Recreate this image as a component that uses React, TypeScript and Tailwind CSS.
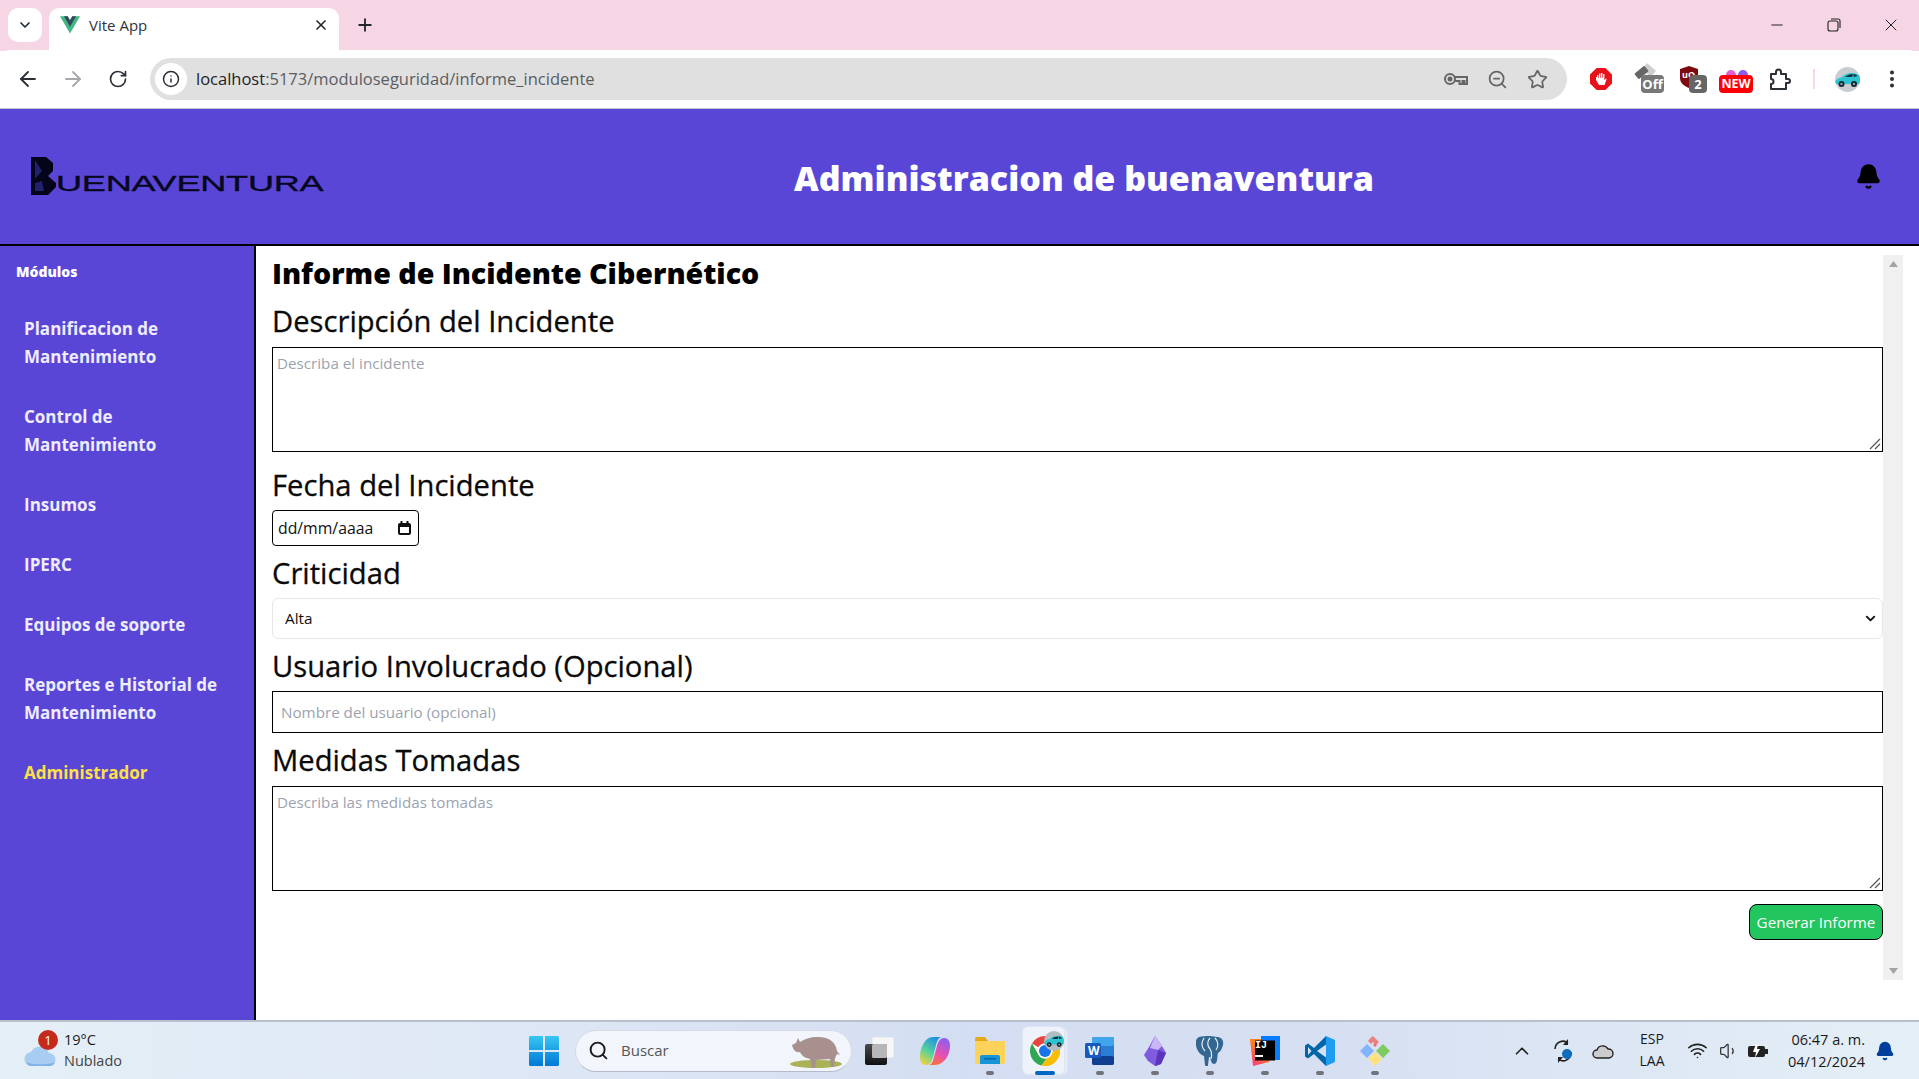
import React from "react";
import { ArrowLeft, ArrowRight, RotateCw, Info, ZoomOut, Star, EllipsisVertical, Plus, X, ChevronDown, ChevronUp, Minus, Bell, Search, Wifi, Volume1 } from "lucide-react";

const sans = "font-['Open_Sans','Noto_Sans',sans-serif]";

function Car({ size }: { size: number }) {
  return (
    <svg width={size} height={size} viewBox="0 0 25 25">
      <path fill="#2bc4d0" d="M0 15c1-3 4-4 7-5 3-3 6-4 10-4 3 0 6 1 8 3v8H1z" />
      <path fill="#14303c" d="M10 10c2-2 5-3 8-3l-1 3zM18.500 7c2 0 3 1 4 2l-4 1z" />
      <circle cx="6.500" cy="17" r="3" fill="#12222a" />
      <circle cx="19" cy="17" r="3" fill="#12222a" />
      <circle cx="6.500" cy="17" r="1.200" fill="#8aa" />
      <circle cx="19" cy="17" r="1.200" fill="#8aa" />
    </svg>
  );
}

function Tabstrip() {
  return (
    <div className="h-[51px] bg-[#f6d5e4] flex items-start pl-[8px] shrink-0">
      <div className="mt-[8px] w-[34px] h-[34px] bg-white rounded-[10px] flex items-center justify-center">
        <ChevronDown size={16} strokeWidth={2.5} color="#1f2937" />
      </div>
      <div className="ml-[7px] mt-[8px] w-[290px] h-[43px] bg-white rounded-t-[10px] flex items-center pl-[11px] pr-[10px] pb-[9px]">
        <svg width="20" height="18" viewBox="0 0 256 221"><path fill="#41b883" d="M204.8 0H256L128 220.8 0 0h97.9L128 51.2 157.4 0z"/><path fill="#35495e" d="M50.2 0 128 133.8 205.4 0h-47.5L128 51.2 97.9 0z"/></svg>
        <span className="ml-[9px] text-[15px] text-[#30343a] font-['Open_Sans',sans-serif] flex-1">Vite App</span>
        <X size={16} strokeWidth={2.5} color="#22262c" />
      </div>
      <div className="ml-[16px] mt-[15px]"><Plus size={20} strokeWidth={2.2} color="#22262c" /></div>
      <div className="ml-auto mt-[15px] flex items-center">
        <div className="w-[57px] flex justify-center"><Minus size={18} strokeWidth={1.3} color="#222" /></div>
        <div className="w-[57px] flex justify-center">
          <svg width="14" height="14" viewBox="0 0 14 14" fill="none" stroke="#222" strokeWidth="1.1"><rect x="1" y="3" width="10" height="10" rx="2"/><path d="M4 1h7a2 2 0 0 1 2 2v7"/></svg>
        </div>
        <div className="w-[57px] flex justify-center"><X size={20} strokeWidth={1.2} color="#222" /></div>
      </div>
    </div>
  );
}

function Toolbar() {
  return (
    <div className="h-[59px] bg-white border-b border-[#c4c4c8] rounded-t-[10px] -mt-px flex items-center shrink-0 pl-[16px] pr-[12px]">
      <div className="flex items-center gap-[21px]">
        <ArrowLeft size={24} strokeWidth={1.8} color="#2b2f36" />
        <ArrowRight size={24} strokeWidth={1.8} color="#a6a8ab" />
        <RotateCw className="ml-[2px]" size={20} strokeWidth={2} color="#2b2f36" />
      </div>
      <div className="ml-[22px] w-[1417px] h-[42px] rounded-full bg-[#e0e0e0] flex items-center pl-[5px] pr-[19px]">
        <div className="w-[32px] h-[32px] rounded-full bg-white flex items-center justify-center"><Info size={18} strokeWidth={2} color="#2b2f36" /></div>
        <div className="ml-[9px] flex-1 text-[16.5px] font-['Open_Sans',sans-serif] text-[#5a5d62]"><span className="text-[#1f2328]">localhost</span>:5173/moduloseguridad/informe_incidente</div>
        <div className="flex items-center gap-[19px]">
          <svg width="24" height="14" viewBox="0 0 24 14" fill="none" stroke="#666" strokeWidth="2"><circle cx="6" cy="7" r="5"/><circle cx="6" cy="7" r="1.500" fill="#666"/><path d="M11 5h12v7h-2.500V9h-2v3h-3V9H11"/></svg>
          <ZoomOut size={21} strokeWidth={2} color="#666" />
          <Star size={21} strokeWidth={2} color="#666" />
        </div>
      </div>
      <div className="ml-[23px] flex items-center flex-1">
        <div className="w-[22px] h-[22px] bg-[#e8121a] flex items-center justify-center [clip-path:polygon(30%_0,70%_0,100%_30%,100%_70%,70%_100%,30%_100%,0_70%,0_30%)]">
          <svg width="12" height="14" viewBox="0 0 12 14" fill="#fff"><path d="M2 6V3h1.4v3h.6V1.5h1.4V6h.6V1h1.4v5h.6V2h1.4v6h.4l1-1.5.9.5L9.500 13H4L1 8V5h1z"/></svg>
        </div>
        <div className="relative ml-[22px] w-[30px] h-[28px]">
          <div className="absolute left-[9px] top-[1px] w-[12px] h-[8px] bg-[#cfcfcf] rotate-[40deg] rounded-[1px]" />
          <div className="absolute left-[1px] top-[4px] w-[13px] h-[7px] bg-[#666] rotate-[-40deg] rounded-[1px]" />
          <div className="absolute right-0 bottom-0 w-[23px] h-[18px] bg-[#777] rounded-[4px] text-white text-[13px] leading-[18px] font-bold text-center font-['Open_Sans',sans-serif]">Off</div>
        </div>
        <div className="relative ml-[15px] w-[28px] h-[28px]">
          <svg className="absolute left-0 top-0" width="20" height="24" viewBox="0 0 20 24"><path fill="#7d0a0f" d="M10 1l9 3v9c0 5-4 8-9 10-5-2-9-5-9-10V4z"/></svg>
          <span className="absolute left-[3px] top-[5px] text-white text-[9px] leading-[10px] font-bold font-['Open_Sans',sans-serif]">uO</span>
          <div className="absolute right-0 bottom-0 w-[18px] h-[18px] bg-[#666] rounded-[4px] text-white text-[13px] leading-[18px] font-bold text-center font-['Open_Sans',sans-serif]">2</div>
        </div>
        <div className="relative ml-[12px] w-[34px] h-[28px]">
          <svg className="absolute left-[6px] top-0" width="24" height="10" viewBox="0 0 24 10"><path fill="#e05cd0" d="M1 10a5 5 0 0 1 10 0z"/><path fill="#8c5cf0" d="M13 10a5 5 0 0 1 10 0z"/></svg>
          <div className="absolute left-0 bottom-0 w-[34px] h-[18px] bg-[#fb0007] rounded-[4px] text-white text-[12.5px] leading-[18px] font-bold text-center font-['Open_Sans',sans-serif]">NEW</div>
        </div>
        <svg className="ml-[16px]" width="23" height="23" viewBox="0 0 23 23" fill="none" stroke="#2b2f36" strokeWidth="2" strokeLinejoin="round"><path d="M2 6h5V4a2.500 2.500 0 0 1 5 0v2h5v5h2a2 2 0 0 1 0 4h-2v6H2v-5a2.500 2.500 0 0 0 0-5z"/></svg>
        <div className="ml-[21px] w-[2px] h-[20px] bg-[#f6d5e4]" />
        <div className="ml-[20px] w-[25px] h-[25px] rounded-full bg-[#c9cdd2] flex items-center justify-center overflow-hidden">
          <Car size={25} />
        </div>
        <div className="ml-auto mr-[4px]"><EllipsisVertical size={22} strokeWidth={2.4} color="#2b2f36" /></div>
      </div>
    </div>
  );
}

function Header() {
  return (
    <div className="h-[137px] bg-[#5a46d6] border-b-2 border-black flex items-center shrink-0 relative">
      <div className="pl-[31px] w-[340px] flex items-end h-[38px] -mt-[2px]">
        <svg width="26" height="38" viewBox="0 0 26 38" className="shrink-0">
          <path fill="#04041a" d="M0 0h15l7 6v8l-5 5 8 7v4l-8 8H0z"/>
          <path fill="#3d3bb0" d="M4 3l7 11-7 8zM4 26l7-2 2 10H4z" opacity="0.55"/>
        </svg>
        <span className="font-['Liberation_Sans',sans-serif] text-[#07071f] text-[26px] leading-[20px] inline-block origin-left scale-x-[1.39] scale-y-[0.86] tracking-[-0.2px] -ml-[1px] mb-[2px] [-webkit-text-stroke:0.4px_#07071f]">UENAVENTURA</span>
      </div>
      <div className="flex-1 text-center pr-[22px] pt-[3px]">
        <span className={`${sans} text-white text-[34px] font-extrabold`}>Administracion de buenaventura</span>
      </div>
      <div className="w-[69px] pr-[37px] flex justify-end"><Bell size={27} fill="#000" color="#000" /></div>
    </div>
  );
}

const items = ["Planificacion de Mantenimiento", "Control de Mantenimiento", "Insumos", "IPERC", "Equipos de soporte", "Reportes e Historial de Mantenimiento"];

function Sidebar() {
  return (
    <aside className="w-[256px] bg-[#5a46d6] border-r-2 border-black shrink-0 text-white pt-[16px] pl-[16px] pr-[20px]">
      <div className={`${sans} text-[14px] font-extrabold leading-[20px]`}>Módulos</div>
      <nav className="mt-[17px] flex flex-col">
        {items.map((t) => (
          <div key={t} className={`${sans} pl-[8px] py-[16px] text-[17px] font-bold leading-[28px] text-[#eeecff]`}>{t}</div>
        ))}
        <div className={`${sans} pl-[8px] py-[16px] text-[17px] font-bold leading-[28px] text-[#fde047]`}>Administrador</div>
      </nav>
    </aside>
  );
}

function Label({ children, className = "" }: { children: React.ReactNode; className?: string }) {
  return <label className={`block ${sans} text-[29.2px] font-medium leading-[38px] text-[#0a0a0a] [-webkit-text-stroke:0.3px_#0a0a0a] ${className}`}>{children}</label>;
}

function Grip() {
  return (
    <svg className="absolute right-[2px] bottom-[2px] pointer-events-none" width="12" height="12" viewBox="0 0 12 12" stroke="#555" strokeWidth="1.200"><path d="M1 11 11 1M6 11l5-5"/></svg>
  );
}

function Main() {
  const field = `block w-full resize-none border border-black ${sans} text-[15.2px] placeholder:text-[#9ca3af] bg-white`;
  return (
    <main className="flex-1 flex min-w-0 bg-white">
      <div className="flex-1 min-w-0 pl-[16px] pt-[7px]">
        <h1 className={`${sans} text-[28.6px] font-black leading-[40px] text-black`}>Informe de Incidente Cibernético</h1>
        <Label className="mt-[9px]">Descripción del Incidente</Label>
        <div className="relative mt-[7px]">
          <textarea className={`${field} h-[105px] p-[4px]`} placeholder="Describa el incidente" />
          <Grip />
        </div>
        <Label className="mt-[14px]">Fecha del Incidente</Label>
        <div className={`mt-[6px] w-[147px] h-[36px] border border-black rounded-[4px] flex items-center justify-between pl-[5px] pr-[6px] ${sans} text-[15.8px] text-[#111]`}>
          <span className="pt-[1px]">dd/mm/aaaa</span>
          <svg width="15" height="15" viewBox="0 0 15 15" fill="none" stroke="#111" strokeWidth="2"><rect x="2" y="3" width="11" height="10" rx="1"/><path d="M2 5h11M4.500 0v3M10.500 0v3"/></svg>
        </div>
        <Label className="mt-[8px]">Criticidad</Label>
        <div className={`mt-[6px] h-[41px] border border-[#e5e7eb] rounded-[6px] flex items-center justify-between pl-[12px] pr-[4px] ${sans} text-[15.3px] text-[#111]`}>
          <span>Alta</span>
          <ChevronDown size={15} strokeWidth={3} color="#111" />
        </div>
        <Label className="mt-[8px]">Usuario Involucrado (Opcional)</Label>
        <input className={`${field} mt-[6px] h-[42px] px-[8px]`} placeholder="Nombre del usuario (opcional)" />
        <Label className="mt-[8px]">Medidas Tomadas</Label>
        <div className="relative mt-[7px]">
          <textarea className={`${field} h-[105px] p-[4px]`} placeholder="Describa las medidas tomadas" />
          <Grip />
        </div>
        <div className="mt-[13px] flex justify-end">
          <button className={`${sans} w-[134px] h-[36px] bg-[#22c55e] border border-black rounded-[8px] text-white text-[15.2px]`}>Generar Informe</button>
        </div>
      </div>
      <div className="w-[36px] shrink-0 pt-[9px] pb-[40px] flex">
        <div className="w-[20px] h-full bg-[#f0f0f0] flex flex-col items-center justify-between py-[6px]">
          <svg width="9" height="6" viewBox="0 0 9 6" fill="#a3a3a3"><path d="M4.500 0 9 6H0z"/></svg>
          <svg width="9" height="6" viewBox="0 0 9 6" fill="#a3a3a3"><path d="M0 0h9L4.500 6z"/></svg>
        </div>
      </div>
    </main>
  );
}

function App_({ active, children }: { active?: boolean; children: React.ReactNode }) {
  return (
    <div className="relative w-[55px] h-[54px] flex items-center justify-center">
      {active && (
        <>
          <span className="absolute left-[37px] top-[3px] bottom-[3px] w-[14px] rounded-[6px] bg-[#e6ebf6] border border-[#dde3ef]" />
          <span className="absolute left-[5px] top-[2px] bottom-[3px] w-[43px] rounded-[6px] bg-[#eef2fb] border border-[#dfe4f0]" />
        </>
      )}
      {children}
    </div>
  );
}

function Dot({ active }: { active?: boolean }) {
  return <span className={`absolute bottom-[3px] left-1/2 -translate-x-1/2 h-[4px] rounded-full ${active ? "w-[20px] bg-[#0067c0]" : "w-[8px] bg-[#70737c]"}`} />;
}

function Taskbar() {
  const t = "font-['Open_Sans',sans-serif] text-[#1a1a1a]";
  return (
    <div className="h-[59px] shrink-0 border-t-2 border-[#b9bfcc] bg-[linear-gradient(90deg,#e4eff7_0%,#dfe8f5_25%,#d4def2_50%,#d7e0f2_70%,#e4eff7_100%)] flex items-center">
      <div className="w-[521px] shrink-0 flex items-center pl-[24px]">
        <div className="relative w-[43px] h-[40px]">
          <svg className="absolute left-0 bottom-[4px]" width="32" height="22" viewBox="0 0 32 22"><path fill="#a9cdf2" d="M8 21a7 7 0 0 1-1-14 10 10 0 0 1 18 1 6.500 6.500 0 0 1 0 13z"/><path fill="#7fb2e8" d="M2 17c4 3 24 3 29 0-1 3-3 4-6 4H8c-3 0-5-1-6-4z"/></svg>
          <div className="absolute left-[14px] -top-[1px] w-[20px] h-[20px] rounded-full bg-[#c42b1c] text-white text-[13px] leading-[20px] text-center font-['Open_Sans',sans-serif]">1</div>
        </div>
        <div className={`${t} text-[14.5px] leading-[21px] -ml-[3px] -mt-[2px]`}>
          <div>19°C</div>
          <div className="text-[#444]">Nublado</div>
        </div>
      </div>
      <div className="w-[45px] shrink-0 flex justify-center">
        <svg width="30" height="30" viewBox="0 0 30 30"><defs><linearGradient id="w" x1="0" y1="0" x2="0" y2="1"><stop offset="0" stopColor="#38c6f4"/><stop offset="1" stopColor="#0078d4"/></linearGradient></defs><path fill="url(#w)" d="M0 1.500a1.500 1.500 0 0 1 1.500-1.500H14v14H0zM16 0h12.500A1.500 1.500 0 0 1 30 1.500V14H16zM0 16h14v14H1.500A1.500 1.500 0 0 1 0 28.500zM16 16h14v12.500a1.500 1.500 0 0 1-1.500 1.500H16z"/></svg>
      </div>
      <div className="ml-[9px] w-[277px] h-[42px] shrink-0 rounded-full bg-[#f2f5fc] border border-[#d6dbe6] border-b-[#b5bbc9] flex items-center pl-[12px] pr-[7px]">
        <Search size={21} strokeWidth={2.2} color="#1b1b1b" />
        <span className={`${t} ml-[12px] text-[15px] text-[#555] flex-1`}>Buscar</span>
        <svg width="56" height="36" viewBox="0 0 56 36"><ellipse cx="28" cy="31" rx="26" ry="4" fill="#a9b257"/><path fill="#a8908f" d="M4 12l4-2 2-5 2 4c5-3 10-5 18-5 12 0 18 6 19 14l3 4-3-1-2 4-1 9h-3l-1-8-14 1-1 8h-3l-2-9c-5-1-8-3-10-7-4 1-7-2-8-7z"/></svg>
      </div>
      <div className="flex items-center shrink-0">
        <App_>
          <svg width="29" height="28" viewBox="0 0 29 28"><defs><linearGradient id="tv" x1="0" y1="0" x2="0" y2="1"><stop offset="0" stopColor="#4a4a4a"/><stop offset="1" stopColor="#101010"/></linearGradient></defs><rect x="7" y="0" width="22" height="21" rx="2" fill="#f6f6f6" stroke="#dedede" strokeWidth=".6"/><rect x="0" y="7" width="22" height="21" rx="2" fill="url(#tv)"/><rect x="7" y="7" width="15" height="14" rx="1.500" fill="#b7b7b7"/></svg>
        </App_>
        <App_>
          <svg width="30" height="30" viewBox="0 0 30 30"><defs><linearGradient id="c1" x1="0.700" y1="0" x2="0.200" y2="1"><stop offset="0" stopColor="#1f8fe8"/><stop offset=".55" stopColor="#58d39a"/><stop offset="1" stopColor="#f3d03e"/></linearGradient><linearGradient id="c2" x1="0.700" y1="0" x2="0.300" y2="1"><stop offset="0" stopColor="#8b5ff0"/><stop offset=".6" stopColor="#ea4fae"/><stop offset="1" stopColor="#f9743b"/></linearGradient></defs><path fill="url(#c2)" d="M15 29h-6c3-1 4-4 5-8l3-11c1-4 3-8 7-8 4 0 6 3 6 8 0 9-6 19-15 19z"/><path fill="url(#c1)" d="M13 1h8c-3 1-4 4-5 8l-3 12c-1 4-3 8-7 8-4 0-6-3-6-8C0 12 5 1 13 1z"/></svg>
        </App_>
        <App_>
          <svg width="30" height="27" viewBox="0 0 30 27"><path fill="#e4a91a" d="M0 2a2 2 0 0 1 2-2h8l3 4H0z"/><path fill="#fcd258" d="M0 4h30v21a2 2 0 0 1-2 2H2a2 2 0 0 1-2-2z"/><path fill="#1695d8" d="M5 27v-7a2 2 0 0 1 2-2h16a2 2 0 0 1 2 2v7z"/><rect x="9" y="21" width="12" height="1.500" fill="#0a65a8"/></svg><Dot />
        </App_>
        <App_ active>
          <svg className="relative" width="30" height="30" viewBox="0 0 30 30"><circle cx="15" cy="15" r="15" fill="#fff"/><path fill="#e8453c" d="M15 0A15 15 0 0 1 28 7.500H15A7.500 7.500 0 0 0 8.500 11.250L2 7.500A15 15 0 0 1 15 0z"/><path fill="#30a853" d="M2 7.500l6.500 11.250a7.500 7.500 0 0 0 8.500 3.500L11.500 29.600A15 15 0 0 1 2 7.500z"/><path fill="#fbbc05" d="M28 7.500a15 15 0 0 1-16.500 22.100L17 22.250a7.500 7.500 0 0 0 4.500-11L15 7.500z"/><circle cx="15" cy="15" r="7.500" fill="#fff"/><circle cx="15" cy="15" r="6" fill="#1a73e8"/></svg>
          <span className="absolute left-[27px] top-[7px] w-[20px] h-[20px] rounded-full bg-[#b4bcc2] overflow-hidden flex items-center justify-center"><Car size={20} /></span>
          <Dot active />
        </App_>
        <App_>
          <svg width="29" height="28" viewBox="0 0 29 28"><rect x="7" y="0" width="22" height="28" rx="2" fill="#2b7cd3"/><rect x="7" y="0" width="22" height="9" rx="2" fill="#41a5ee"/><rect x="7" y="19" width="22" height="9" rx="2" fill="#103f91"/><rect x="0" y="6" width="16" height="15" rx="1.500" fill="#185abd"/></svg>
          <span className="absolute left-[16px] top-[19px] text-white text-[12px] leading-[16px] font-bold font-['Open_Sans',sans-serif]">W</span><Dot />
        </App_>
        <App_>
          <svg width="22" height="30" viewBox="0 0 22 30"><path fill="#7f5be0" d="M11 0l7 10 4 7-5 11-6 2-7-5-4-6 5-8z"/><path fill="#c9b6f7" d="M11 0l7 10-4 4-8-2 2-5z"/><path fill="#5a37ba" d="M14 14l8 3-5 11-6 2z"/></svg><Dot />
        </App_>
        <App_>
          <svg width="28" height="30" viewBox="0 0 28 30"><path fill="#336791" d="M14 0c3 0 5 1 7 1 4 0 7 3 6 8-1 4-3 7-5 8-1 3 0 7-2 10-2 2-4 1-5-2l-1-4h-1l-1 8c0 2-2 2-3 0l-1-9c-3-1-5-3-7-7C-1 8-1 3 3 1c3-1 7-1 11-1z"/><path fill="none" stroke="#e8eef4" strokeWidth="1.200" d="M8 2C5 7 5 11 9 15M14 2c-3 3-3 8 0 11 2 3 2 6 1 10M19 2c3 3 4 8 1 12"/></svg><Dot />
        </App_>
        <App_>
          <svg width="30" height="30" viewBox="0 0 30 30"><defs><linearGradient id="ij" x1="0" y1="1" x2="1" y2="0"><stop offset="0" stopColor="#ff318c"/><stop offset=".5" stopColor="#fc801d"/></linearGradient></defs><path fill="url(#ij)" d="M0 3h12l16 16-2 5H20l-1 2L3 30z"/><path fill="#087cfa" d="M11 0h19v24h-6L11 7z"/><rect x="5" y="4.500" width="20" height="20" fill="#000"/></svg>
          <span className="absolute left-[18px] top-[16px] text-white text-[10px] leading-[12px] font-bold font-['Liberation_Mono',monospace]">IJ</span>
          <span className="absolute left-[18px] top-[31px] w-[8px] h-[2px] bg-white" /><Dot />
        </App_>
        <App_>
          <svg width="30" height="30" viewBox="0 0 30 30"><path fill="#0065a9" d="M21 0 9 12 3 7.500 0 9.500v11l3 2L9 18l12 12 3-15z"/><path fill="#1f9cf0" d="M21 0l9 4v22l-9 4z"/><path fill="#0065a9" d="M21 8 12 15l9 7z" opacity="0"/><path fill="#d7e0f2" d="M21 8.500 12 15l9 6.500zM3 11l3.500 4L3 19z"/></svg><Dot />
        </App_>
        <App_>
          <svg width="30" height="30" viewBox="0 0 30 30"><path fill="#ef7f7f" d="M10.500 2 13 0l6 6-3 3-3-3-2 2-3-3z"/><path fill="#83b4ff" d="M7 8l7 7-7 7-7-7z"/><path fill="#7ecb5f" d="M23 8l7 7-7 7-7-7z"/><path fill="#ffe27e" d="M15 16l7 7-7 7-7-7z"/><path fill="#e86f6f" d="M15 7l2 2-2 2-2-2z"/></svg><Dot />
        </App_>
      </div>
      <div className="ml-auto flex items-center shrink-0 pr-[24px]">
        <ChevronUp size={22} strokeWidth={1.8} color="#222" />
        <svg className="ml-[19px]" width="22" height="24" viewBox="0 0 22 24" fill="none"><path stroke="#222" strokeWidth="1.600" d="M3 10a8 8 0 0 1 13-6M19 13a8 8 0 0 1-13 7"/><path fill="#222" d="M16 0v6h-5zM6 24v-6h5z"/><circle cx="15" cy="15" r="5" fill="#0f6cbd"/></svg>
        <svg className="ml-[18px]" width="22" height="16" viewBox="0 0 22 16"><path fill="#ccc" stroke="#222" strokeWidth="1.400" d="M5 15a4 4 0 0 1 0-8 6 6 0 0 1 11-1 4.500 4.500 0 0 1 1 9z"/></svg>
        <div className={`${t} ml-[13px] w-[50px] text-center text-[14px] leading-[22px] -mt-[1px]`}><div>ESP</div><div>LAA</div></div>
        <Wifi className="ml-[10px]" size={21} strokeWidth={1.8} color="#222" />
        <Volume1 className="ml-[11px]" size={20} strokeWidth={1.5} color="#333" />
        <svg className="ml-[8px]" width="22" height="16" viewBox="0 0 22 16"><rect x="1" y="3" width="17" height="11" rx="2" fill="#222"/><rect x="18" y="6" width="3" height="5" fill="#222"/><path fill="#fff" d="M9 1l-3 8h3l-1 6 5-9h-3l1-5z"/></svg>
        <div className={`${t} ml-[6px] w-[90px] text-right text-[14.5px] leading-[22px]`}><div>06:47 a. m.</div><div>04/12/2024</div></div>
        <Bell className="ml-[10px]" size={20} fill="#003f9e" color="#003f9e" />
      </div>
    </div>
  );
}

export default function App() {
  return (
    <div className="h-[1079px] w-[1919px] flex flex-col overflow-hidden">
      <Tabstrip />
      <Toolbar />
      <Header />
      <div className="flex-1 flex min-h-0">
        <Sidebar />
        <Main />
      </div>
      <Taskbar />
    </div>
  );
}
